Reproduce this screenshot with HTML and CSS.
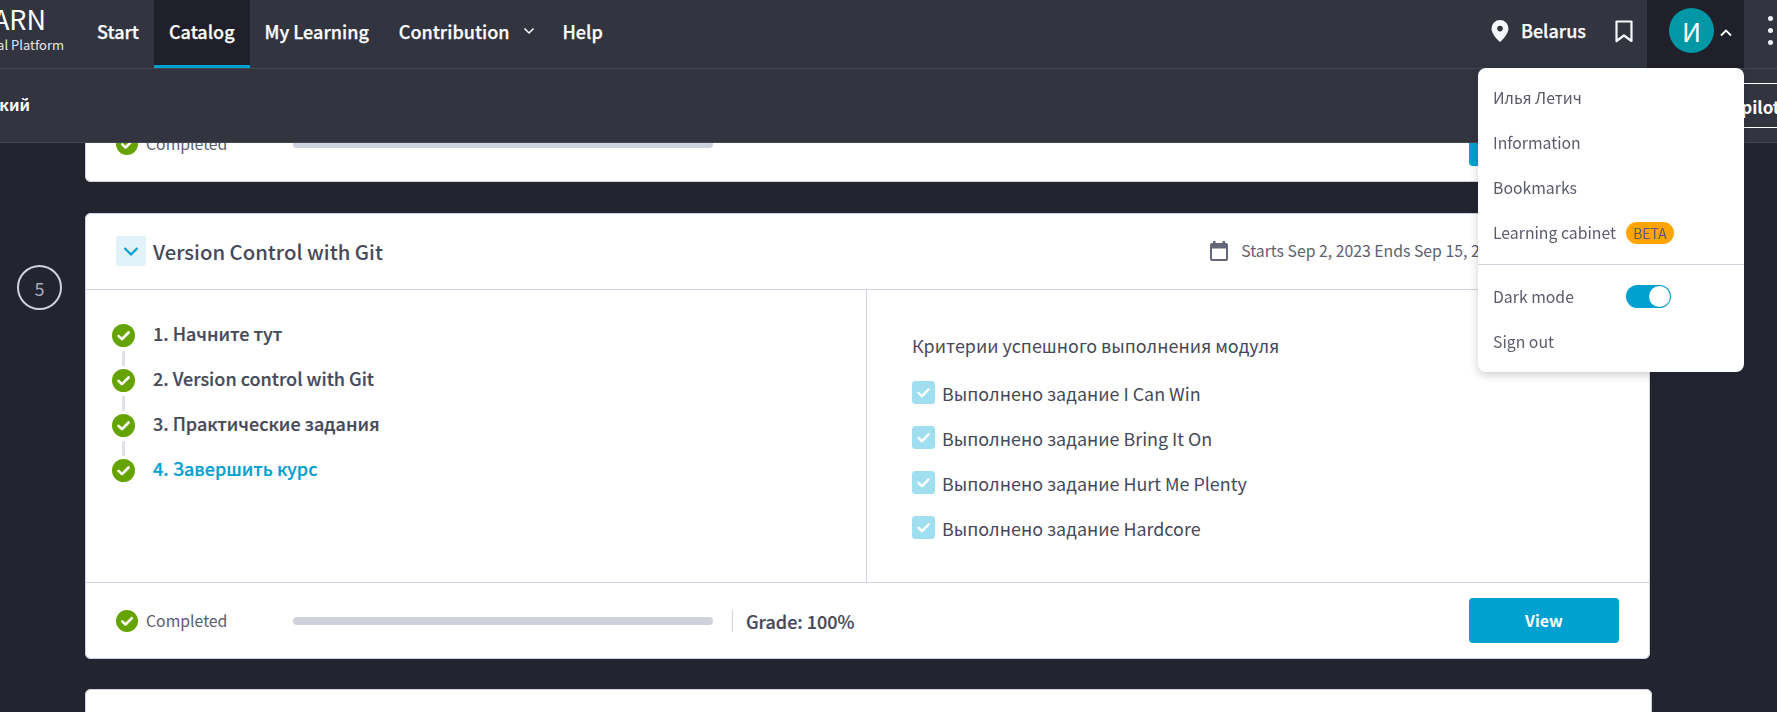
FILE: index.html
```html
<!DOCTYPE html>
<html lang="en">
<head>
<meta charset="utf-8">
<title>Learning catalog</title>
<link rel="stylesheet" href="styles.css">
</head>
<body>
<svg class="defs" width="0" height="0" aria-hidden="true">
  <symbol id="ok" viewBox="0 0 24 24"><circle cx="12" cy="12" r="12" fill="#65a300"/><path d="M6.8 12.4l3.6 3.4 6.9-7" fill="none" stroke="#fff" stroke-width="2.8" stroke-linecap="round" stroke-linejoin="round"/></symbol>
  <symbol id="box" viewBox="0 0 23 23"><rect width="23" height="23" rx="3.5" fill="#a0dff0"/><path d="M6.5 11.8l3.5 3.4 6.6-6.8" fill="none" stroke="#fff" stroke-width="2.4" stroke-linecap="round" stroke-linejoin="round"/></symbol>
</svg>

<header class="topbar">
  <div class="mainbar">
    <div class="brand"><div class="brand-name">LEARN</div><div class="brand-sub">Digital Platform</div></div>
    <nav class="nav">
      <a class="nav-item">Start</a>
      <a class="nav-item active">Catalog</a>
      <a class="nav-item">My Learning</a>
      <a class="nav-item">Contribution<svg class="nav-chev" width="12" height="8" viewBox="0 0 12 8"><path d="M1.5 1.5L6 6l4.500-4.500" fill="none" stroke="#fff" stroke-width="1.500"/></svg></a>
      <a class="nav-item help">Help</a>
    </nav>
    <div class="tools">
      <svg class="pin" width="18" height="22" viewBox="0 0 18 22"><path fill-rule="evenodd" d="M9 0a8.500 8.500 0 0 1 8.500 8.500C17.500 14 11.500 19.800 9 22 6.500 19.800.5 14 .5 8.500A8.500 8.500 0 0 1 9 0zm0 5.800a2.800 2.800 0 1 0 0 5.600 2.800 2.800 0 0 0 0-5.600z" fill="#f6f7fa"/></svg>
      <span class="country">Belarus</span>
      <svg class="mark" width="18" height="23" viewBox="0 0 18 23"><path d="M1.500 1.500h15v19.500L9 15.500 1.500 21z" fill="none" stroke="#f6f7fa" stroke-width="2.200" stroke-linejoin="round"/></svg>
      <div class="account">
        <span class="avatar">И</span>
        <svg width="12" height="8" viewBox="0 0 12 8"><path d="M1 6.500l5-5 5 5" fill="none" stroke="#fff" stroke-width="1.800"/></svg>
      </div>
      <div class="dots"><i></i><i></i><i></i></div>
    </div>
  </div>
  <div class="subbar">
    <div class="lang">Русский</div>
    <div class="copilot">Copilot</div>
  </div>
  <div class="menu">
    <div class="menu-group">
      <a class="menu-item">Илья Летич</a>
      <a class="menu-item">Information</a>
      <a class="menu-item">Bookmarks</a>
      <a class="menu-item">Learning cabinet<span class="beta">BETA</span></a>
    </div>
    <div class="menu-group second">
      <a class="menu-item">Dark mode<span class="toggle"><span class="knob"></span></span></a>
      <a class="menu-item">Sign out</a>
    </div>
  </div>
</header>

<main class="page">
  <div class="row">
    <div class="spacer"></div>
    <section class="card">
      <div class="card-foot">
        <div class="status"><svg class="ok" width="22" height="22"><use href="#ok"/></svg>Completed</div>
        <div class="progress"></div>
        <a class="view">View</a>
      </div>
    </section>
  </div>

  <div class="row current-row">
    <div class="num">5</div>
    <section class="card">
      <div class="card-head">
        <span class="toggle-box"><svg width="16" height="11" viewBox="0 0 16 11"><path d="M1.500 2l6.500 6.500L14.500 2" fill="none" stroke="#00a0d0" stroke-width="2.200"/></svg></span>
        <h2 class="title">Version Control with Git</h2>
        <div class="dates">
          <svg width="18" height="20" viewBox="0 0 18 20"><path fill-rule="evenodd" d="M3 0h2.500v2h7V0H15v2h1a2 2 0 0 1 2 2v14a2 2 0 0 1-2 2H2a2 2 0 0 1-2-2V4a2 2 0 0 1 2-2h1zM2 7.500V18h14V7.500z" fill="#636678"/></svg>
          <span>Starts Sep 2, 2023 Ends Sep 15, 2023</span>
        </div>
      </div>
      <div class="card-body">
        <ol class="steps">
          <li class="step"><div class="marker"><svg width="23" height="23"><use href="#ok"/></svg><i class="link"></i></div><span>1. Начните тут</span></li>
          <li class="step"><div class="marker"><svg width="23" height="23"><use href="#ok"/></svg><i class="link"></i></div><span>2. Version control with Git</span></li>
          <li class="step"><div class="marker"><svg width="23" height="23"><use href="#ok"/></svg><i class="link"></i></div><span>3. Практические задания</span></li>
          <li class="step current"><div class="marker"><svg width="23" height="23"><use href="#ok"/></svg></div><span>4. Завершить курс</span></li>
        </ol>
        <div class="criteria">
          <h3 class="crit-title">Критерии успешного выполнения модуля</h3>
          <ul class="crit-list">
            <li class="crit"><svg width="23" height="23"><use href="#box"/></svg>Выполнено задание I Can Win</li>
            <li class="crit"><svg width="23" height="23"><use href="#box"/></svg>Выполнено задание Bring It On</li>
            <li class="crit"><svg width="23" height="23"><use href="#box"/></svg>Выполнено задание Hurt Me Plenty</li>
            <li class="crit"><svg width="23" height="23"><use href="#box"/></svg>Выполнено задание Hardcore</li>
          </ul>
        </div>
      </div>
      <div class="card-foot">
        <div class="status"><svg class="ok" width="22" height="22"><use href="#ok"/></svg>Completed</div>
        <div class="progress"></div>
        <div class="grade">Grade: 100%</div>
        <a class="view">View</a>
      </div>
    </section>
  </div>

  <div class="row">
    <div class="spacer"></div>
    <section class="card next"></section>
  </div>
</main>
</body>
</html>
```

FILE: styles.css
```css
* { box-sizing: border-box; }
html, body { margin: 0; height: 100%; }
body {
  background: #22242f;
  overflow: hidden;
  font-family: "Noto Sans CJK SC", "Noto Sans", sans-serif;
  color: #464959;
}
.defs { position: absolute; }
a { display: block; }
h2, h3, ol, ul { margin: 0; padding: 0; list-style: none; font-weight: 400; }

/* top bar */
.topbar { position: fixed; top: 0; left: 0; width: 100%; z-index: 5; background: #32343f; color: #fff; }
.mainbar { height: 69px; display: flex; border-bottom: 1px solid #55576380; }
.brand { width: 82px; padding: 4px 18px 0 0; display: flex; flex-direction: column; align-items: flex-end; overflow: hidden; white-space: nowrap; }
.brand-name { font-size: 27px; line-height: 30px; margin-right: 18px; }
.brand-sub { font-size: 13px; line-height: 18px; margin-top: 2px; color: #e6e7ec; }
.nav { display: flex; height: 68px; }
.nav-item { display: flex; align-items: center; padding: 0 15px 7px; font-size: 18px; font-weight: 500; -webkit-text-stroke: .25px #fff; line-height: 24px; white-space: nowrap; }
.nav-item.active { background: #1f2029; border-bottom: 3px solid #00a0d0; padding-bottom: 4px; }
.nav-chev { margin-left: 13px; }
.help { margin-left: -2px; }
.tools { margin-left: auto; display: flex; align-items: flex-start; }
.pin { margin-top: 20px; }
.country { margin: 18px 0 0 12px; font-size: 18px; font-weight: 500; -webkit-text-stroke: .25px #fff; line-height: 24px; }
.mark { margin: 20px 0 0 29px; }
.account { width: 97px; height: 68px; margin-left: 14px; background: #1f2029; display: flex; align-items: flex-start; padding: 8px 0 0 22px; }
.account svg { margin: 21px 0 0 6px; }
.avatar { width: 45px; height: 45px; border-radius: 50%; background: #0097a7; display: flex; align-items: center; justify-content: center; font-size: 26px; line-height: 30px; }
.dots { width: 33px; padding: 16px 0 0 24px; display: flex; flex-direction: column; gap: 7px; }
.dots i { width: 5px; height: 5px; border-radius: 50%; background: #f2f3f7; }
.subbar { height: 74px; border-bottom: 1px solid #55576380; display: flex; align-items: center; justify-content: space-between; overflow: hidden; white-space: nowrap; }
.lang { width: 30px; overflow: hidden; font-size: 16px; font-weight: 700; line-height: 24px; display: flex; justify-content: flex-end; margin-top: -3px; }
.copilot { flex: none; margin-right: -40px; height: 45px; border: 1px solid #fff; padding: 0 36px 0 60px; font-size: 17px; font-weight: 700; line-height: 45px; }

/* account menu */
.menu { position: absolute; top: 68px; right: 33px; width: 266px; height: 304px; background: #fff; border-radius: 8px; box-shadow: 0 3px 10px rgba(30, 32, 45, .22); color: #5a5c6e; font-size: 15.8px; }
.menu-group { padding: 7px 15px 9px; }
.menu-group.second { padding-top: 9px; border-top: 1px solid #cfd1dc; }
.menu-item { height: 45px; display: flex; align-items: center; line-height: 24px; }
.beta { margin-left: 10px; width: 48px; height: 22px; border-radius: 11px; background: #ffa500; font-size: 14px; line-height: 22px; text-align: center; color: #5a5c6e; }
.toggle { margin-left: 52px; width: 45px; height: 23px; border-radius: 12px; background: #00a0d0; display: flex; justify-content: flex-end; padding: 1px; }
.knob { width: 21px; height: 21px; border-radius: 50%; background: #fff; }

/* page */
.page { padding-top: 106px; display: flex; flex-direction: column; gap: 30px; }
.current-row { margin-top: 1px; }
.row { display: grid; grid-template-columns: 85px 1565px; }
.row:last-child { grid-template-columns: 85px 1567px; }
.num { width: 45px; height: 45px; margin: 52px 0 0 17px; border: 2px solid #cfd1dc; border-radius: 50%; display: flex; align-items: center; justify-content: center; color: #a9abb8; font-size: 18px; line-height: 24px; }
.card { background: #fff; border-radius: 6px; box-shadow: inset 0 0 0 1px #cfd1dc; }
.card.next { height: 60px; }
.card-head { height: 77px; display: flex; align-items: center; padding-left: 31px; border-bottom: 1px solid #cfd1dc; }
.toggle-box { width: 30px; height: 30px; border-radius: 3px; background: #e1f3f9; display: flex; align-items: center; justify-content: center; }
.title { margin-left: 7px; font-size: 20.3px; line-height: 30px; font-weight: 500; color: #464959; white-space: nowrap; }
.dates { margin-left: auto; padding-right: 144px; display: flex; align-items: center; gap: 13px; font-size: 15.8px; line-height: 24px; color: #5d6070; }
.card-body { height: 293px; display: flex; border-bottom: 1px solid #cfd1dc; }
.steps { width: 782px; padding: 34px 0 0 27px; border-right: 1px solid #cfd1dc; }
.step { height: 45px; display: flex; gap: 18px; font-size: 18px; font-weight: 500; -webkit-text-stroke: .2px currentColor; line-height: 19px; color: #464959; }
.step.current { color: #00a0d0; }
.marker { display: flex; flex-direction: column; align-items: center; }
.link { width: 3px; height: 15px; margin-top: 4px; background: #dfe1ea; }
.criteria { padding: 43px 0 0 45px; }
.crit-title { font-size: 17.9px; line-height: 24px; }
.crit-list { margin-top: 13px; }
.crit { height: 45px; display: flex; align-items: center; gap: 7px; font-size: 17.9px; line-height: 24px; }
.card-foot { height: 76px; display: flex; align-items: center; padding: 0 0 1px 31px; }
.status { width: 177px; display: flex; align-items: center; gap: 8px; font-size: 15.8px; line-height: 24px; color: #5a5c6e; }
.progress { width: 420px; height: 8px; border-radius: 4px; background: #cfd1dc; }
.grade { margin-left: 19px; padding-left: 13px; border-left: 1px solid #cfd1dc; font-size: 18px; font-weight: 500; -webkit-text-stroke: .2px currentColor; line-height: 22px; }
.view { margin: 0 31px 0 auto; width: 150px; height: 45px; border-radius: 4px; background: #00a0d0; color: #fff; font-size: 16px; font-weight: 700; line-height: 45px; text-align: center; }
```
